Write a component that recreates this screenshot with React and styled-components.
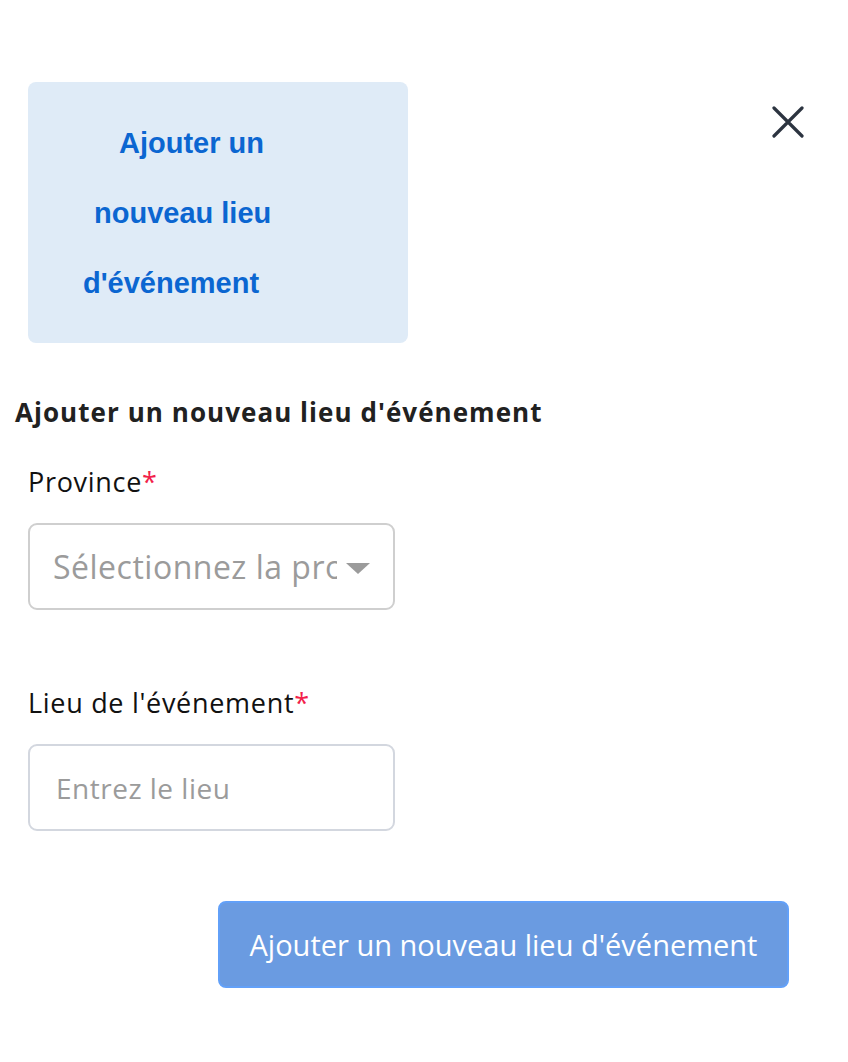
import React from "react"
import styled, { createGlobalStyle } from "styled-components"

const Global = createGlobalStyle`
  html, body { margin: 0; padding: 0; background: #fff; }
  body { font-family: "Open Sans", "Noto Sans", sans-serif; }
  * { box-sizing: border-box; }
`

const Page = styled.div`
  width: 848px;
  min-height: 1062px;
  padding: 82px 0 0 0;
`

const Header = styled.div`
  display: flex;
  justify-content: space-between;
  align-items: flex-start;
  padding: 0 44px 0 28px;
`

const Card = styled.div`
  width: 380px;
  height: 261px;
  background: #dfebf7;
  border-radius: 8px;
  padding-top: 26px;
  display: flex;
  flex-direction: column;
  font-family: "Liberation Sans", Arial, sans-serif;
  font-weight: 700;
  font-size: 29px;
  color: #0b66d1;
`

const CardLine = styled.div`
  height: 70px;
  line-height: 70px;
  padding-left: ${p => p.$left}px;
  white-space: nowrap;
`

const Close = styled.button`
  margin-top: 24px;
  width: 32px;
  height: 32px;
  padding: 0;
  border: none;
  background: none;
  display: flex;
  align-items: center;
  justify-content: center;
  cursor: pointer;
`

const Title = styled.h2`
  margin: 52px 0 0 15px;
  font-size: 26px;
  font-weight: 700;
  color: #212121;
  line-height: 34px;
  letter-spacing: 1.05px;
`

const Field = styled.div`
  margin: ${p => p.$top}px 0 0 28px;
  width: 367px;
`

const Label = styled.div`
  font-size: 27px;
  color: #111;
  line-height: 34px;
  letter-spacing: 0.7px;
  margin-bottom: 24px;
  span { color: #f21f4b; }
`

const Box = styled.div`
  position: relative;
  height: 87px;
  border: 2px solid ${p => p.$border};
  border-radius: 9px;
  display: flex;
  align-items: center;
  padding-left: ${p => p.$pad}px;
  padding-right: 56px;
  overflow: hidden;
`

const Placeholder = styled.div`
  font-size: ${p => p.$size}px;
  letter-spacing: 0.5px;
  color: #9b9b9b;
  white-space: nowrap;
  overflow: hidden;
`

const Caret = styled.div`
  position: absolute;
  right: 23px;
  top: 38px;
  width: 0;
  height: 0;
  border-left: 12px solid transparent;
  border-right: 12px solid transparent;
  border-top: 11px solid #9b9b9b;
`

const Footer = styled.div`
  display: flex;
  justify-content: flex-end;
  padding-right: 59px;
  margin-top: 70px;
`

const Submit = styled.button`
  width: 571px;
  height: 87px;
  background: #6a9be1;
  border: 2px solid #62a0f8;
  border-radius: 8px;
  color: #fff;
  font-family: "Open Sans", "Noto Sans", sans-serif;
  font-size: 29px;
  cursor: pointer;
`

export default function App() {
  return (
    <Page>
      <Global />
      <Header>
        <Card>
          <CardLine $left={91}>Ajouter un</CardLine>
          <CardLine $left={66}>nouveau lieu</CardLine>
          <CardLine $left={55}>d'événement</CardLine>
        </Card>
        <Close aria-label="Fermer">
          <svg width="32" height="32" viewBox="0 0 32 32">
            <path d="M2 2 L30 30 M30 2 L2 30" stroke="#2c3440" strokeWidth="3.2" strokeLinecap="round" />
          </svg>
        </Close>
      </Header>

      <Title>Ajouter un nouveau lieu d'événement</Title>

      <Field $top={36}>
        <Label>Province<span>*</span></Label>
        <Box $border="#cfcfcf" $pad={23}>
          <Placeholder $size={32}>Sélectionnez la province</Placeholder>
          <Caret />
        </Box>
      </Field>

      <Field $top={76}>
        <Label>Lieu de l'événement<span>*</span></Label>
        <Box $border="#d3d7df" $pad={26}>
          <Placeholder $size={28}>Entrez le lieu</Placeholder>
        </Box>
      </Field>

      <Footer>
        <Submit>Ajouter un nouveau lieu d'événement</Submit>
      </Footer>
    </Page>
  )
}
